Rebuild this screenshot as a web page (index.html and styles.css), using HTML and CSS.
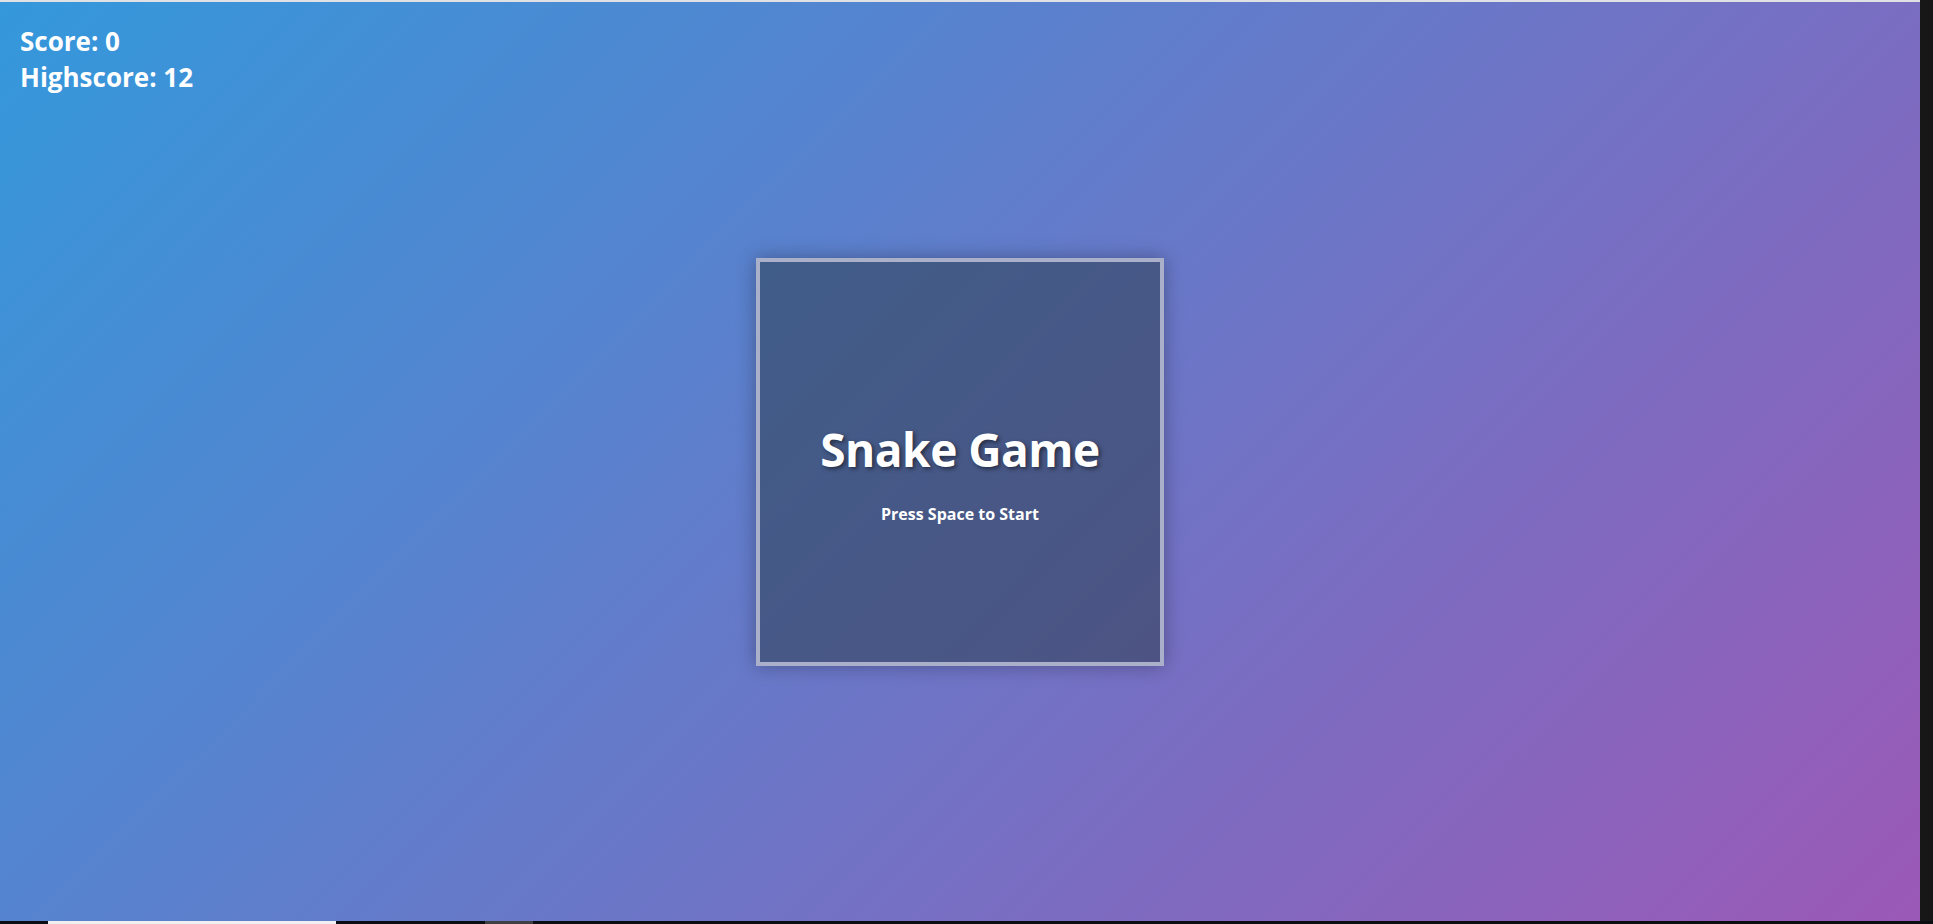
FILE: index.html
```html
<!DOCTYPE html>
<html lang="en">
<head>
<meta charset="utf-8">
<title>Snake Game</title>
<link rel="stylesheet" href="styles.css">
</head>
<body>
<div class="window">
  <main class="stage">
    <div class="hud">
      <div class="hud-line">Score: 0</div>
      <div class="hud-line">Highscore: 12</div>
    </div>
    <div class="board">
      <div class="overlay">
        <h1 class="title">Snake Game</h1>
        <p class="hint">Press Space to Start</p>
      </div>
    </div>
  </main>
  <div class="scrollbar"></div>
</div>
<div class="taskbar">
  <span class="tb-gap tb-gap-a"></span>
  <span class="tb-light"></span>
  <span class="tb-gap tb-gap-b"></span>
  <span class="tb-gray"></span>
</div>
</body>
</html>
```

FILE: styles.css
```css
html, body {
  margin: 0;
  padding: 0;
}
body {
  width: 1933px;
  height: 924px;
  display: flex;
  flex-direction: column;
  background: #0b0d10;
  overflow: hidden;
  font-family: "Open Sans", "Noto Sans", "Liberation Sans", sans-serif;
}
.window {
  flex: 1;
  display: flex;
  min-height: 0;
}
.stage {
  position: relative;
  flex: 1;
  border-top: 2px solid #dfe1e4;
  background: linear-gradient(135deg, #3498db 0%, #9b59b6 100%);
  display: flex;
  align-items: center;
  justify-content: center;
}
.scrollbar {
  width: 13px;
  background: #171717;
}
.hud {
  position: absolute;
  left: 20px;
  top: 21px;
  color: #fff;
  font-weight: 700;
  font-size: 26px;
  line-height: 36px;
}
.board {
  width: 400px;
  height: 400px;
  border: 4px solid #aab0c9;
  background: rgba(44, 62, 80, 0.55);
  box-shadow: 0 0 18px rgba(0, 0, 0, 0.3);
  display: flex;
  align-items: center;
  justify-content: center;
}
.overlay {
  text-align: center;
  color: #fff;
  margin-top: 21px;
}
.title {
  margin: 0;
  font-size: 46px;
  font-weight: 700;
  line-height: 56px;
  letter-spacing: -0.5px;
  text-shadow: 2px 2px 4px rgba(0, 0, 0, 0.5);
}
.hint {
  margin: 27px 0 0;
  font-size: 16px;
  font-weight: 700;
  line-height: 20px;
}
.taskbar {
  height: 3px;
  display: flex;
}
.tb-gap-a { width: 48px; }
.tb-light { width: 288px; background: #f0f0f0; }
.tb-gap-b { width: 149px; }
.tb-gray { width: 48px; background: #404040; }
```
